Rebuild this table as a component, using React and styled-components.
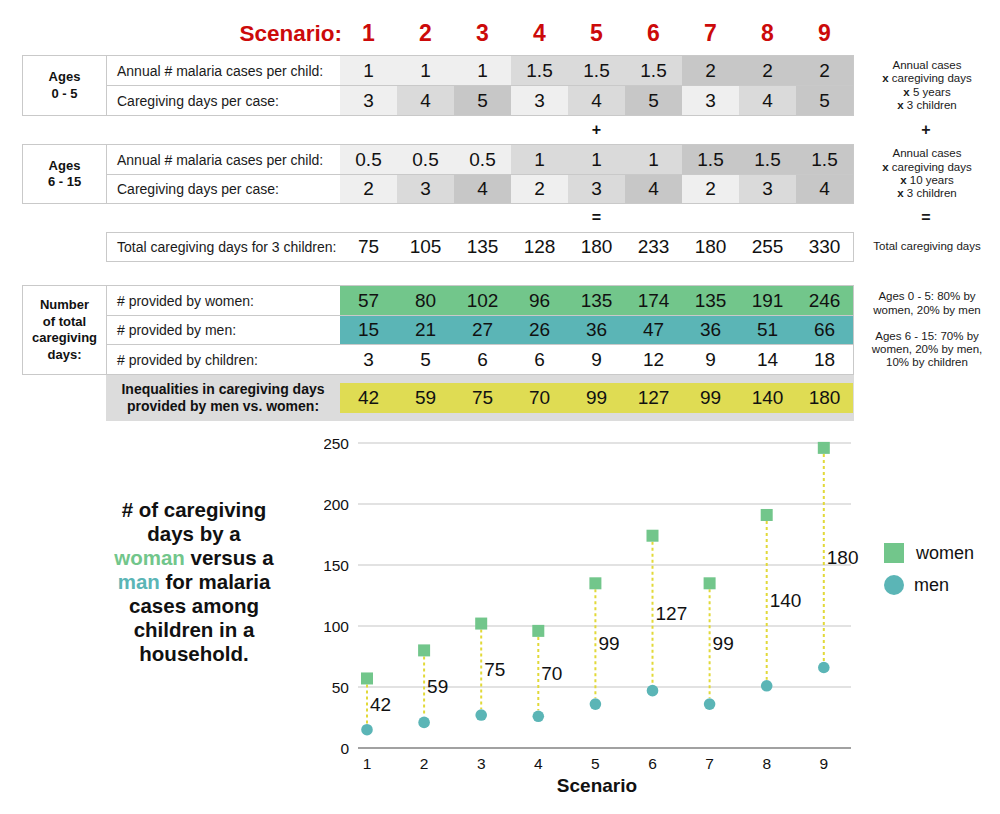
import React from "react";
import styled, { createGlobalStyle } from "styled-components";

const GlobalStyle = createGlobalStyle`
  body {
    margin: 0;
    background: #fff;
    color: #111;
    font-family: "Liberation Sans", Arial, sans-serif;
  }
`;

const LIGHT = "#efefef";
const MID = "#dadada";
const DARK = "#c7c7c7";
const GREEN = "#72c68b";
const TEAL = "#5bb5b6";
const YELLOW = "#dfdc53";
const LINE = "#c9c9c9";

const scenarios = [1, 2, 3, 4, 5, 6, 7, 8, 9];
const byGroup = [LIGHT, LIGHT, LIGHT, MID, MID, MID, DARK, DARK, DARK];
const byStep = [LIGHT, MID, DARK, LIGHT, MID, DARK, LIGHT, MID, DARK];

const young = {
  cases: [1, 1, 1, 1.5, 1.5, 1.5, 2, 2, 2],
  days: [3, 4, 5, 3, 4, 5, 3, 4, 5],
};
const older = {
  cases: [0.5, 0.5, 0.5, 1, 1, 1, 1.5, 1.5, 1.5],
  days: [2, 3, 4, 2, 3, 4, 2, 3, 4],
};
const totals = [75, 105, 135, 128, 180, 233, 180, 255, 330];
const women = [57, 80, 102, 96, 135, 174, 135, 191, 246];
const men = [15, 21, 27, 26, 36, 47, 36, 51, 66];
const children = [3, 5, 6, 6, 9, 12, 9, 14, 18];
const gaps = [42, 59, 75, 70, 99, 127, 99, 140, 180];

const Cells = ({ values, colors, bg }) =>
  values.map((v, i) => (
    <Cell key={i} $bg={colors ? colors[i] : bg}>
      {v}
    </Cell>
  ));

// the "+" / "=" row between the blocks: sign sits under scenario 5
const SignRow = ({ sign }) => (
  <Line $h={28}>
    <Gap />
    {scenarios.map((s) => (
      <SignCell key={s}>{s === 5 ? sign : ""}</SignCell>
    ))}
    <Note $sign>{sign}</Note>
  </Line>
);

// chart scales, in svg coordinates (plot starts 13px in from the svg's left)
const yOf = (v) => 327 - v * 1.22;
const xOf = (i) => 43 + i * 57.1;
const X0 = 34;
const X1 = 527;

const Chart = () => (
  <svg width="676" height="393" viewBox="0 0 676 393">
    {[50, 100, 150, 200, 250].map((v) => (
      <line key={v} x1={X0} x2={X1} y1={yOf(v)} y2={yOf(v)} stroke="#d9d9d9" strokeWidth="1.5" />
    ))}
    <line x1={X0} x2={X1} y1={yOf(0)} y2={yOf(0)} stroke="#444" strokeWidth="1.2" />
    {[0, 50, 100, 150, 200, 250].map((v) => (
      <text key={v} x="25" y={yOf(v)} fontSize="15.5" textAnchor="end" dominantBaseline="central" fill="#111">
        {v}
      </text>
    ))}
    {scenarios.map((s, i) => {
      const x = xOf(i);
      const yw = yOf(women[i]);
      const ym = yOf(men[i]);
      return (
        <g key={s}>
          <text x={x} y="342" fontSize="15.5" textAnchor="middle" dominantBaseline="central" fill="#111">
            {s}
          </text>
          <line x1={x} x2={x} y1={yw + 6} y2={ym - 6} stroke="#e2d939" strokeWidth="2" strokeDasharray="3 3" />
          <rect x={x - 6} y={yw - 6} width="12" height="12" fill={GREEN} />
          <circle cx={x} cy={ym} r="5.8" fill={TEAL} />
          <text x={x + 3} y={(yw + ym) / 2} fontSize="19" dominantBaseline="central" fill="#111">
            {gaps[i]}
          </text>
        </g>
      );
    })}
    <text x="273" y="364" fontSize="19" fontWeight="bold" textAnchor="middle" dominantBaseline="central" fill="#111">
      Scenario
    </text>
    <rect x="560" y="122" width="20" height="20" fill={GREEN} />
    <text x="592" y="132" fontSize="18" dominantBaseline="central" fill="#111">
      women
    </text>
    <circle cx="570" cy="164" r="10" fill={TEAL} />
    <text x="590" y="164" fontSize="18" dominantBaseline="central" fill="#111">
      men
    </text>
  </svg>
);

const App = () => {
  return (
    <Page>
      <GlobalStyle />

      <Line $h={43}>
        <HeadLabel>Scenario:</HeadLabel>
        {scenarios.map((s) => (
          <HeadNum key={s}>{s}</HeadNum>
        ))}
      </Line>

      <Line>
        <Block>
          <Side>
            Ages
            <br />0 - 5
          </Side>
          <Rows>
            <Row $h={29}>
              <Label>Annual # malaria cases per child:</Label>
              <Cells values={young.cases} colors={byGroup} />
            </Row>
            <Row $h={29}>
              <Label>Caregiving days per case:</Label>
              <Cells values={young.days} colors={byStep} />
            </Row>
          </Rows>
        </Block>
        <Note>
          <div>Annual cases</div>
          <div>
            <b>x</b> caregiving days
          </div>
          <div>
            <b>x</b> 5 years
          </div>
          <div>
            <b>x</b> 3 children
          </div>
        </Note>
      </Line>

      <SignRow sign="+" />

      <Line>
        <Block>
          <Side>
            Ages
            <br />6 - 15
          </Side>
          <Rows>
            <Row $h={29}>
              <Label>Annual # malaria cases per child:</Label>
              <Cells values={older.cases} colors={byGroup} />
            </Row>
            <Row $h={28}>
              <Label>Caregiving days per case:</Label>
              <Cells values={older.days} colors={byStep} />
            </Row>
          </Rows>
        </Block>
        <Note>
          <div>Annual cases</div>
          <div>
            <b>x</b> caregiving days
          </div>
          <div>
            <b>x</b> 10 years
          </div>
          <div>
            <b>x</b> 3 children
          </div>
        </Note>
      </Line>

      <SignRow sign="=" />

      <Line>
        <TotalBox>
          <Row $h={28}>
            <Label>Total caregiving days for 3 children:</Label>
            <Cells values={totals} />
          </Row>
        </TotalBox>
        <Note>Total caregiving days</Note>
      </Line>

      <Line $top={23}>
        <Block>
          <Side>
            Number
            <br />
            of total
            <br />
            caregiving
            <br />
            days:
          </Side>
          <Rows>
            <Row $h={29}>
              <Label># provided by women:</Label>
              <Cells values={women} bg={GREEN} />
            </Row>
            <Row $h={28}>
              <Label># provided by men:</Label>
              <Cells values={men} bg={TEAL} />
            </Row>
            <Row $h={29}>
              <Label># provided by children:</Label>
              <Cells values={children} />
            </Row>
          </Rows>
        </Block>
        <Note>
          <NotePara>
            Ages 0 - 5: 80% by
            <br />
            women, 20% by men
          </NotePara>
          <NotePara>
            Ages 6 - 15: 70% by
            <br />
            women, 20% by men,
            <br />
            10% by children
          </NotePara>
        </Note>
      </Line>

      <Line>
        <Inequality>
          <IneqLabel>
            Inequalities in caregiving days
            <br />
            provided by men vs. women:
          </IneqLabel>
          <Cells values={gaps} bg={YELLOW} />
        </Inequality>
      </Line>

      <Bottom>
        <Caption>
          # of caregiving
          <br />
          days by a
          <br />
          <Woman>woman</Woman> versus a
          <br />
          <Man>man</Man> for malaria
          <br />
          cases among
          <br />
          children in a
          <br />
          household.
        </Caption>
        <Chart />
      </Bottom>
    </Page>
  );
};

const Page = styled.div`
  width: 1000px;
  height: 814px;
  box-sizing: border-box;
  padding: 12px 0 0 22px;
  overflow: hidden;
`;

const Line = styled.div`
  display: flex;
  align-items: stretch;
  height: ${(p) => (p.$h ? `${p.$h}px` : "auto")};
  margin-top: ${(p) => p.$top || 0}px;
`;

const HeadLabel = styled.div`
  width: 320px;
  display: flex;
  align-items: center;
  justify-content: flex-end;
  font-size: 22.5px;
  font-weight: bold;
  color: #cc0a0a;
`;

const HeadNum = styled.div`
  width: 57px;
  display: flex;
  align-items: center;
  justify-content: center;
  font-size: 23px;
  font-weight: bold;
  color: #cc0a0a;

  &:nth-child(2) {
    margin-left: -2px;
  }
`;

const Block = styled.div`
  width: 832px;
  box-sizing: border-box;
  display: flex;
  border: 1px solid ${LINE};
`;

const Side = styled.div`
  width: 84px;
  box-sizing: border-box;
  border-right: 1px solid ${LINE};
  display: flex;
  align-items: center;
  justify-content: center;
  text-align: center;
  font-size: 13px;
  font-weight: bold;
  line-height: 16.5px;
`;

const Rows = styled.div`
  display: flex;
  flex-direction: column;
`;

const Row = styled.div`
  display: flex;
  height: ${(p) => p.$h}px;

  & + & {
    border-top: 1px solid ${LINE};
  }
`;

const Label = styled.div`
  width: 233px;
  box-sizing: border-box;
  padding-left: 10px;
  display: flex;
  align-items: center;
  font-size: 14px;
  color: #1a1a1a;
`;

const Cell = styled.div`
  width: 57px;
  display: flex;
  align-items: center;
  justify-content: center;
  font-size: 19px;
  background: ${(p) => p.$bg || "transparent"};
  color: #111;
`;

const SignCell = styled(Cell)`
  font-size: 16px;
  font-weight: bold;
`;

const Gap = styled.div`
  width: 318px;
`;

const Note = styled.div`
  width: 146px;
  display: flex;
  flex-direction: column;
  align-items: center;
  justify-content: center;
  text-align: center;
  font-size: ${(p) => (p.$sign ? "16px" : "11.5px")};
  font-weight: ${(p) => (p.$sign ? "bold" : "normal")};
  line-height: 13.3px;
  color: #1a1a1a;
`;

const NotePara = styled.div`
  & + & {
    margin-top: 13px;
  }
`;

const TotalBox = styled.div`
  margin-left: 84px;
  width: 748px;
  box-sizing: border-box;
  border: 1px solid ${LINE};
`;

const Inequality = styled.div`
  margin-left: 84px;
  width: 748px;
  box-sizing: border-box;
  display: flex;
  background: #dcdcdc;
  padding: 8px 0 8px;
  height: 46px;
`;

const IneqLabel = styled.div`
  width: 234px;
  display: flex;
  align-items: center;
  justify-content: center;
  text-align: center;
  font-size: 14px;
  font-weight: bold;
  line-height: 17px;
`;

const Bottom = styled.div`
  display: flex;
  align-items: flex-start;
`;

const Caption = styled.div`
  width: 260px;
  margin: 77px 0 0 42px;
  text-align: center;
  font-size: 20.5px;
  font-weight: bold;
  line-height: 24px;
  color: #111;
`;

const Woman = styled.span`
  color: ${GREEN};
`;

const Man = styled.span`
  color: ${TEAL};
`;

export default App;
